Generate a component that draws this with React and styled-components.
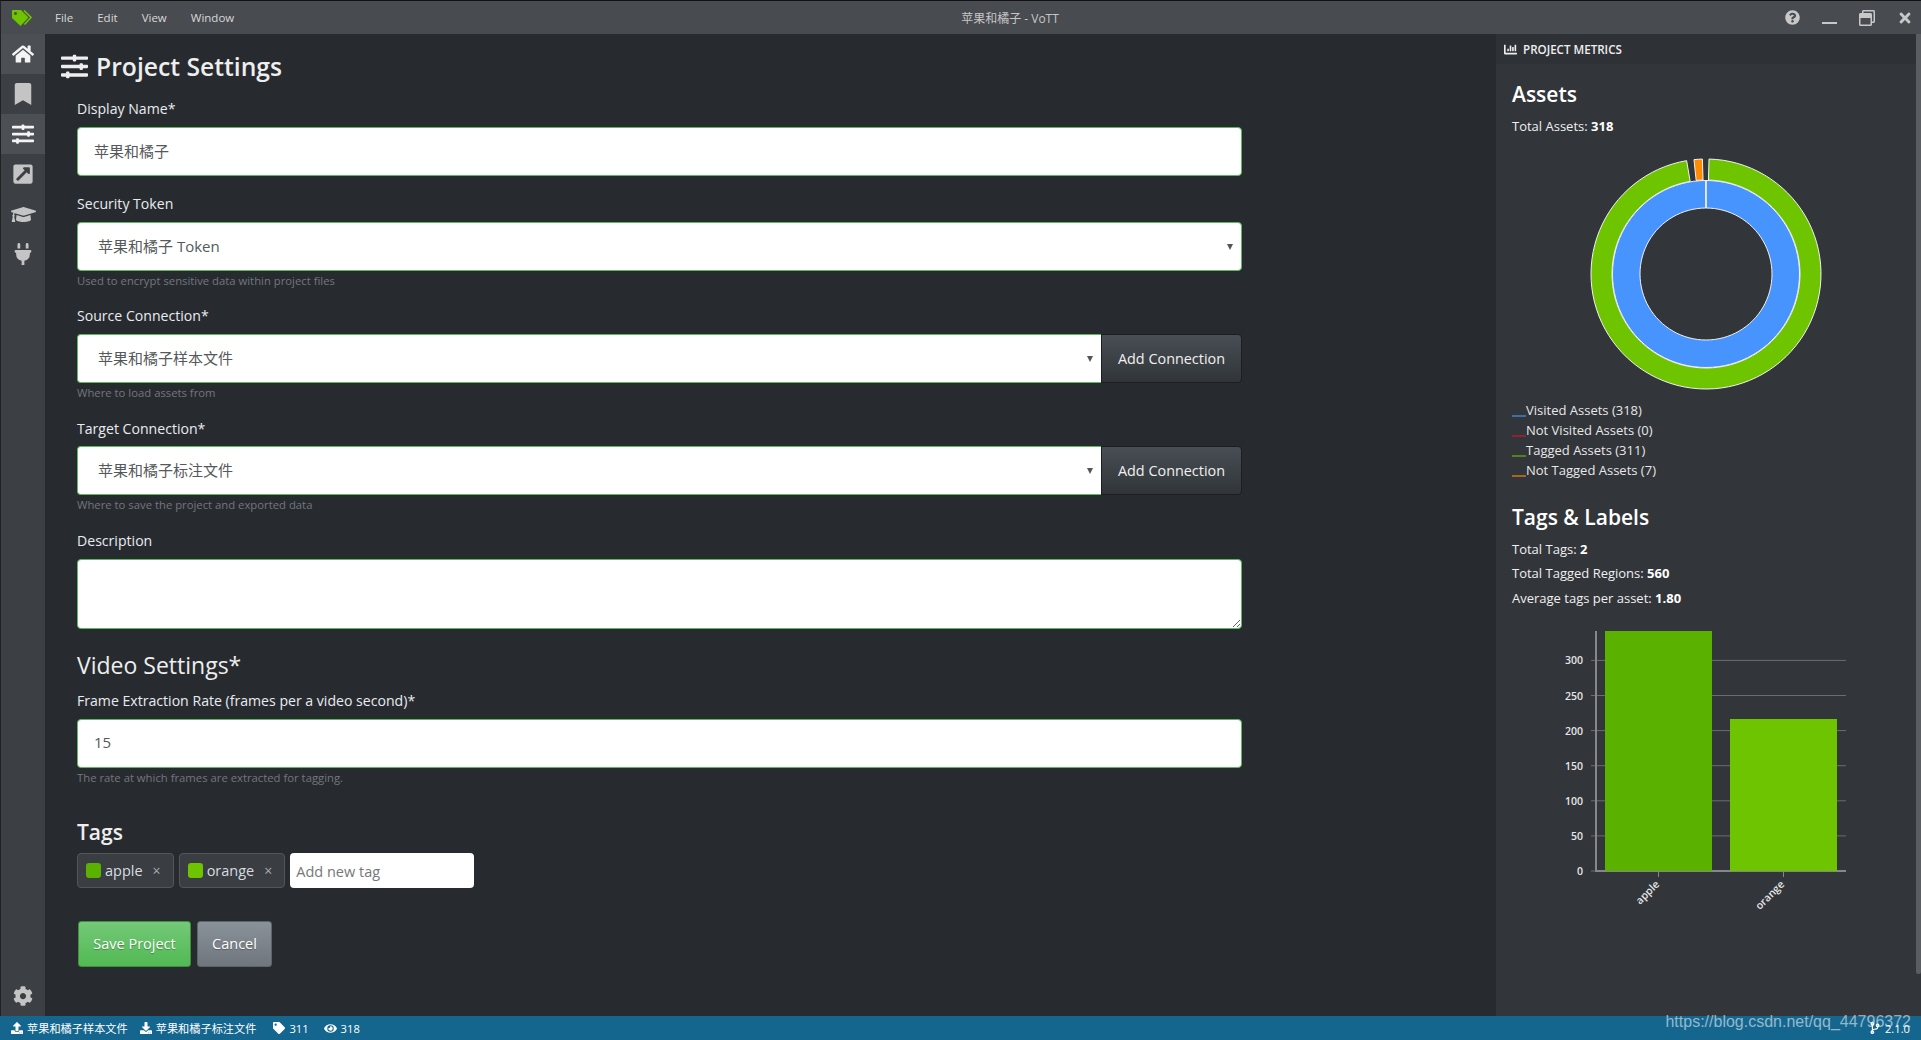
import React from "react";
import styled, { createGlobalStyle } from "styled-components";
import {
  FaHome,
  FaBookmark,
  FaSlidersH,
  FaExternalLinkSquareAlt,
  FaGraduationCap,
  FaPlug,
  FaCog,
  FaUpload,
  FaDownload,
  FaTag,
  FaEye,
  FaChartBar,
  FaQuestionCircle,
  FaTimes,
  FaCodeBranch,
  FaRegWindowRestore,
} from "react-icons/fa";

const FONT = `"Open Sans", "Noto Sans CJK SC", sans-serif`;

const GlobalStyle = createGlobalStyle`
  html, body {
    margin: 0;
    padding: 0;
    height: 100%;
    overflow: hidden;
    background: #272b30;
    font-family: ${FONT};
    color: #eee;
  }
  * { box-sizing: border-box; }
`;

const polar = (r, deg) => {
  const a = ((deg - 90) * Math.PI) / 180;
  return [120 + r * Math.cos(a), 120 + r * Math.sin(a)];
};

const arc = (r0, r1, from, to) => {
  const large = to - from > 180 ? 1 : 0;
  const [x0, y0] = polar(r1, from);
  const [x1, y1] = polar(r1, to);
  const [x2, y2] = polar(r0, to);
  const [x3, y3] = polar(r0, from);
  return `M${x0} ${y0} A${r1} ${r1} 0 ${large} 1 ${x1} ${y1} L${x2} ${y2} A${r0} ${r0} 0 ${large} 0 ${x3} ${y3} Z`;
};

const Logo = () => (
  <svg width="20" height="16" viewBox="0 0 20 16">
    <path
      fill="#6fc400"
      fillRule="evenodd"
      d="M0 1 Q0 0 1 0 H9 L16 7 Q16.500 7.500 16 8 L9 15.500 Q8.500 16 8 15.500 L0 8 Z M3.500 2 a1.500 1.500 0 1 0 .01 0 Z"
    />
    <path fill="none" stroke="#6fc400" strokeWidth="1.600" d="M12 0.500 L19 7.500 L12.500 14.500" />
  </svg>
);

const Donut = () => (
  <DonutSvg width="240" height="240" viewBox="0 0 240 240">
    <g stroke="#f2f2f2" strokeWidth="1">
      <path fill="#4894ff" d={arc(66, 93.500, 0, 359.900)} />
      <path fill="#6fc400" d={arc(94, 115, 1.500, 350.300)} />
      <path fill="#ff8c00" d={arc(94, 115, 354, 358.200)} />
      <line x1="120" y1="26" x2="120" y2="54" />
    </g>
  </DonutSvg>
);

const TICKS = [300, 250, 200, 150, 100, 50, 0];
const BASE = 251;

const BarChart = () => (
  <ChartSvg width="388" height="310" viewBox="0 0 388 310">
    {TICKS.map((t) => {
      const y = BASE - t * 0.702;
      return (
        <g key={t}>
          <line x1="79" x2="334" y1={y} y2={y} stroke="#6a6d71" strokeWidth="1" />
          <ChartLabel x="71" y={y + 4} textAnchor="end">
            {t}
          </ChartLabel>
        </g>
      );
    })}
    <line x1="84" x2="84" y1="11" y2={BASE + 1} stroke="#85878a" strokeWidth="2" />
    <line x1="83" x2="334" y1={BASE} y2={BASE} stroke="#85878a" strokeWidth="2" />
    <rect x="93" y="11" width="107" height={BASE - 11} fill="#5bb100" />
    <rect x="218" y="99" width="107" height={BASE - 99} fill="#6fc400" />
    <line x1="146.500" x2="146.500" y1={BASE} y2={BASE + 6} stroke="#85878a" />
    <line x1="271.500" x2="271.500" y1={BASE} y2={BASE + 6} stroke="#85878a" />
    <ChartLabel x="148" y={BASE + 14} textAnchor="end" transform={`rotate(-45 148 ${BASE + 14})`}>
      apple
    </ChartLabel>
    <ChartLabel x="273" y={BASE + 14} textAnchor="end" transform={`rotate(-45 273 ${BASE + 14})`}>
      orange
    </ChartLabel>
  </ChartSvg>
);

const NAV = [
  { icon: FaHome, active: true },
  { icon: FaBookmark },
  { icon: FaSlidersH, active: true },
  { icon: FaExternalLinkSquareAlt },
  { icon: FaGraduationCap },
  { icon: FaPlug },
];

const LEGEND = [
  { color: "#3d6ea8", text: "Visited Assets (318)" },
  { color: "#8f2431", text: "Not Visited Assets (0)" },
  { color: "#55801c", text: "Tagged Assets (311)" },
  { color: "#a5671f", text: "Not Tagged Assets (7)" },
];

export default function App() {
  return (
    <Shell>
      <GlobalStyle />
      <TitleBar>
        <LogoSlot>
          <Logo />
        </LogoSlot>
        <Menu>
          <MenuItem>File</MenuItem>
          <MenuItem>Edit</MenuItem>
          <MenuItem>View</MenuItem>
          <MenuItem>Window</MenuItem>
        </Menu>
        <WindowTitle>苹果和橘子 - VoTT</WindowTitle>
        <WindowControls>
          <FaQuestionCircle size={15} />
          <MinimizeBar />
          <FaRegWindowRestore size={16} />
          <FaTimes size={16} />
        </WindowControls>
      </TitleBar>

      <Body>
        <Sidebar>
          <div>
            {NAV.map(({ icon: Icon, active }, i) => (
              <NavItem key={i} $active={active}>
                <Icon size={i === 4 ? 25 : 22} />
              </NavItem>
            ))}
          </div>
          <NavItem>
            <FaCog size={20} />
          </NavItem>
        </Sidebar>

        <Main>
          <PageTitle>
            <FaSlidersH size={27} />
            Project Settings
          </PageTitle>

          <Form>
            <Group>
              <Label>Display Name*</Label>
              <TextInput defaultValue="苹果和橘子" />
            </Group>

            <Group>
              <Label>Security Token</Label>
              <SelectBox>苹果和橘子 Token</SelectBox>
              <Help>Used to encrypt sensitive data within project files</Help>
            </Group>

            <Group>
              <Label>Source Connection*</Label>
              <InputRow>
                <SelectBox $joined>苹果和橘子样本文件</SelectBox>
                <AddButton>Add Connection</AddButton>
              </InputRow>
              <Help>Where to load assets from</Help>
            </Group>

            <Group>
              <Label>Target Connection*</Label>
              <InputRow>
                <SelectBox $joined>苹果和橘子标注文件</SelectBox>
                <AddButton>Add Connection</AddButton>
              </InputRow>
              <Help>Where to save the project and exported data</Help>
            </Group>

            <Group>
              <Label>Description</Label>
              <TextArea />
            </Group>

            <SectionTitle>Video Settings*</SectionTitle>
            <Group>
              <Label>Frame Extraction Rate (frames per a video second)*</Label>
              <TextInput defaultValue="15" />
              <Help>The rate at which frames are extracted for tagging.</Help>
            </Group>

            <TagsTitle>Tags</TagsTitle>
            <TagRow>
              <TagChip>
                <TagSwatch $color="#5bb100" />
                apple
                <TagClose>×</TagClose>
              </TagChip>
              <TagChip>
                <TagSwatch $color="#6fc400" />
                orange
                <TagClose>×</TagClose>
              </TagChip>
              <TagInput placeholder="Add new tag" />
            </TagRow>

            <Actions>
              <SaveButton>Save Project</SaveButton>
              <CancelButton>Cancel</CancelButton>
            </Actions>
          </Form>
        </Main>

        <Metrics>
          <MetricsHeader>
            <FaChartBar size={13} />
            PROJECT METRICS
          </MetricsHeader>
          <MetricsBody>
            <MetricsTitle>Assets</MetricsTitle>
            <Stat>
              Total Assets: <b>318</b>
            </Stat>
            <Donut />
            <Legend>
              {LEGEND.map((l) => (
                <LegendRow key={l.text}>
                  <LegendSwatch $color={l.color} />
                  {l.text}
                </LegendRow>
              ))}
            </Legend>
            <TagsMetricsTitle>Tags &amp; Labels</TagsMetricsTitle>
            <Stat>
              Total Tags: <b>2</b>
            </Stat>
            <Stat>
              Total Tagged Regions: <b>560</b>
            </Stat>
            <Stat>
              Average tags per asset: <b>1.80</b>
            </Stat>
            <BarChart />
          </MetricsBody>
          <Scrollbar />
        </Metrics>
      </Body>

      <StatusBar>
        <StatusGroup>
          <StatusItem>
            <FaUpload size={12} />
            苹果和橘子样本文件
          </StatusItem>
          <StatusItem>
            <FaDownload size={12} />
            苹果和橘子标注文件
          </StatusItem>
          <StatusItem $wide>
            <FaTag size={12} />
            311
          </StatusItem>
          <StatusItem>
            <FaEye size={13} />
            318
          </StatusItem>
        </StatusGroup>
        <StatusItem>
          <FaCodeBranch size={12} />
          2.1.0
        </StatusItem>
      </StatusBar>
      <Watermark>https://blog.csdn.net/qq_44796372</Watermark>
    </Shell>
  );
}

const Shell = styled.div`
  position: relative;
  width: 100vw;
  height: 100vh;
  display: flex;
  flex-direction: column;
  overflow: hidden;
`;

const TitleBar = styled.header`
  height: 34px;
  flex: none;
  display: flex;
  align-items: center;
  position: relative;
  background: #484b50;
  border-top: 1px solid #111;
  border-left: 1px solid #222;
  color: #d8d8d8;
  font-size: 11.500px;
`;

const LogoSlot = styled.div`
  width: 44px;
  display: flex;
  justify-content: center;
  padding-right: 2px;
`;

const Menu = styled.nav`
  display: flex;
  gap: 24px;
  padding-left: 10px;
`;

const MenuItem = styled.span`
  color: #d8d8d8;
`;

const WindowTitle = styled.div`
  position: absolute;
  left: 0;
  right: 0;
  text-align: center;
  font-size: 12px;
  color: #c6c6c6;
  padding-left: 98px;
  pointer-events: none;
`;

const WindowControls = styled.div`
  margin-left: auto;
  display: flex;
  align-items: center;
  gap: 22px;
  padding-right: 8px;
  color: #c8c8c8;
`;

const MinimizeBar = styled.span`
  width: 15px;
  height: 2px;
  margin-top: 11px;
  background: #c8c8c8;
`;

const Body = styled.div`
  flex: 1;
  min-height: 0;
  display: flex;
`;

const Sidebar = styled.aside`
  width: 45px;
  flex: none;
  display: flex;
  flex-direction: column;
  justify-content: space-between;
  background: #3c3f44;
  border-left: 1px solid #222;
`;

const NavItem = styled.div`
  height: 40px;
  display: flex;
  align-items: center;
  justify-content: center;
  color: ${(p) => (p.$active ? "#f4f4f4" : "#c4c4c4")};
  background: ${(p) => (p.$active ? "#4c4f54" : "transparent")};
`;

const Main = styled.main`
  flex: 1;
  min-width: 0;
  padding: 0 0 0 16px;
  background: #272b30;
`;

const PageTitle = styled.h3`
  margin: 0;
  height: 63px;
  padding-top: 2px;
  display: flex;
  align-items: center;
  gap: 8px;
  font-size: 24.700px;
  font-weight: 600;
  color: #eee;
`;

const Form = styled.form`
  width: 1165px;
  margin-left: 16px;
`;

const Group = styled.div`
  margin-bottom: 16.300px;
`;

const Label = styled.label`
  display: block;
  height: 22px;
  line-height: 24px;
  margin-bottom: 7.700px;
  font-size: 14.100px;
  color: #e9ecef;
`;

const fieldStyles = `
  display: block;
  width: 100%;
  height: 49px;
  border: 1px solid #5cb85c;
  border-radius: 4px;
  background: #fff;
  color: #55595c;
  font-family: ${FONT};
  font-size: 15px;
  outline: none;
`;

const TextInput = styled.input`
  ${fieldStyles}
  padding: 0 16px 2px;
`;

const TextArea = styled.textarea`
  ${fieldStyles}
  height: 70px;
  padding: 8px 16px;
  resize: vertical;
`;

const SelectBox = styled.div`
  ${fieldStyles}
  position: relative;
  flex: 1;
  display: flex;
  align-items: center;
  padding: 0 20px 2px;
  ${(p) => p.$joined && "border-radius: 4px 0 0 4px; border-right: none;"}
  &::after {
    content: "";
    position: absolute;
    right: 8px;
    top: 21px;
    border-left: 3px solid transparent;
    border-right: 3px solid transparent;
    border-top: 6px solid #555;
  }
`;

const InputRow = styled.div`
  display: flex;
`;

const AddButton = styled.button`
  width: 141px;
  flex: none;
  height: 49px;
  border: 1px solid #1c1e22;
  border-radius: 0 4px 4px 0;
  background: linear-gradient(#484e55, #3a3f44 60%, #313539);
  color: #f0f0f0;
  font-family: ${FONT};
  font-size: 14.400px;
`;

const Help = styled.small`
  display: block;
  height: 17.400px;
  padding-top: 2px;
  line-height: 15px;
  font-size: 11.300px;
  color: #72777c;
`;

const SectionTitle = styled.h3`
  margin: 18.100px 0 6px;
  height: 36px;
  line-height: 36px;
  font-size: 23px;
  font-weight: 400;
  color: #eee;
`;

const TagsTitle = styled.h4`
  margin: 32px 0 6px;
  height: 30px;
  line-height: 30px;
  font-size: 21px;
  font-weight: 600;
  color: #eee;
`;

const TagRow = styled.div`
  display: flex;
  align-items: stretch;
  gap: 5px;
  height: 35px;
`;

const TagChip = styled.div`
  display: flex;
  align-items: center;
  padding: 0 12px 0 8px;
  border: 1px solid #52565b;
  border-radius: 4px;
  background: #3a3d42;
  color: #d8dce0;
  font-size: 14.500px;
`;

const TagSwatch = styled.span`
  width: 15px;
  height: 15px;
  margin-right: 4px;
  border-radius: 3px;
  background: ${(p) => p.$color};
`;

const TagClose = styled.span`
  margin-left: 10px;
  color: #aaa;
  font-size: 14px;
`;

const TagInput = styled.input`
  width: 184px;
  border: none;
  border-radius: 4px;
  padding: 2px 6px 0;
  background: #fff;
  font-family: ${FONT};
  font-size: 14.500px;
  outline: none;
  &::placeholder {
    color: #777;
    opacity: 1;
  }
`;

const Actions = styled.div`
  display: flex;
  gap: 6px;
  margin-top: 33px;
  padding-left: 1px;
`;

const SaveButton = styled.button`
  width: 113px;
  height: 46px;
  border: 1px solid #3f8f3f;
  border-radius: 3px;
  background: linear-gradient(#73c977, #52b954);
  color: #fff;
  font-family: ${FONT};
  font-size: 14.500px;
  text-shadow: 0 1px 1px rgba(0, 0, 0, 0.3);
`;

const CancelButton = styled(SaveButton)`
  width: 75px;
  border-color: #5e646a;
  background: linear-gradient(#8a9299, #6f767d);
`;

const Metrics = styled.section`
  position: relative;
  width: 425px;
  flex: none;
  display: flex;
  flex-direction: column;
  padding-right: 5px;
  background: #32353a;
`;

const Scrollbar = styled.div`
  position: absolute;
  top: 0;
  right: 0;
  width: 5px;
  height: 940px;
  background: #5a5d62;
  border-radius: 0 0 2px 2px;
`;

const MetricsHeader = styled.div`
  height: 30px;
  flex: none;
  display: flex;
  align-items: center;
  gap: 6px;
  padding-left: 8px;
  background: #2e3136;
  font-size: 11.600px;
  font-weight: 600;
  color: #eee;
`;

const MetricsBody = styled.div`
  padding: 15px 16px 0;
`;

const MetricsTitle = styled.h4`
  margin: 0 0 8px;
  height: 30px;
  line-height: 30px;
  font-size: 21px;
  font-weight: 600;
  color: #fff;
`;

const TagsMetricsTitle = styled(MetricsTitle)`
  margin: 22px 0 8px;
`;

const Stat = styled.p`
  margin: 0;
  height: 24.500px;
  line-height: 18px;
  font-size: 13px;
  color: #f0f0f0;
  b {
    font-weight: 700;
    color: #fff;
  }
`;

const DonutSvg = styled.svg`
  display: block;
  margin: 12px auto 6px;
`;

const ChartSvg = styled.svg`
  display: block;
  margin-top: 7px;
`;

const ChartLabel = styled.text`
  font-family: ${FONT};
  font-size: 10.500px;
  font-weight: 600;
  fill: #e6e6e6;
`;

const Legend = styled.div`
  display: block;
`;

const LegendRow = styled.div`
  height: 20px;
  line-height: 20px;
  display: flex;
  font-size: 13px;
  color: #e8e8e8;
`;

const LegendSwatch = styled.span`
  width: 14px;
  height: 17px;
  border-bottom: 2px solid ${(p) => p.$color};
`;

const StatusBar = styled.footer`
  height: 24px;
  flex: none;
  display: flex;
  align-items: center;
  justify-content: space-between;
  padding: 0 11px;
  background: #14668f;
  color: #fff;
  font-size: 11.200px;
`;

const StatusGroup = styled.div`
  display: flex;
  gap: 12px;
`;

const StatusItem = styled.span`
  display: flex;
  align-items: center;
  gap: 4px;
  ${(p) => p.$wide && "margin-left: 5px; margin-right: 3px;"}
`;

const Watermark = styled.div`
  position: absolute;
  right: 10px;
  bottom: 9px;
  font-family: "Liberation Sans", sans-serif;
  font-size: 16px;
  color: rgba(255, 255, 255, 0.55);
  pointer-events: none;
`;
